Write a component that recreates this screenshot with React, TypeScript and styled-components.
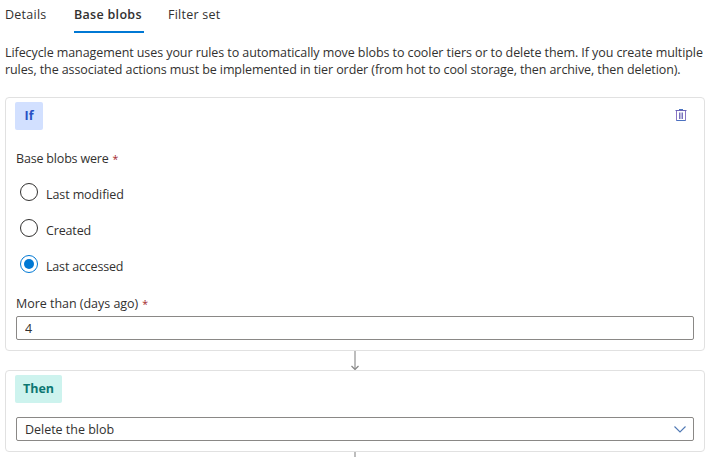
import React, { useState } from "react";
import styled, { createGlobalStyle } from "styled-components";

const GlobalStyle = createGlobalStyle`
  *, *::before, *::after { box-sizing: border-box; }
  body {
    margin: 0;
    background: #fff;
    color: #323130;
    font: 12.5px/17px "Open Sans", "Noto Sans", sans-serif;
    overflow: hidden;
  }
`;

const Page = styled.main`
  width: 712px;
  height: 457px;
  padding: 0 7px 0 5px;
  overflow: hidden;
`;

const TabList = styled.nav`
  display: flex;
  height: 33px;
  gap: 24px;
`;

const Tab = styled.button<{ $active?: boolean; $width: number; $spacing: number }>`
  width: ${(p) => p.$width}px;
  height: 33px;
  padding: 5px 0 8px;
  border: 0;
  border-bottom: 2px solid ${(p) => (p.$active ? "#0078d4" : "transparent")};
  background: none;
  color: inherit;
  font: inherit;
  font-weight: ${(p) => (p.$active ? 600 : 400)};
  letter-spacing: ${(p) => p.$spacing}px;
  text-align: left;
  white-space: nowrap;
`;

const Description = styled.p`
  margin: 11px 0 19px;
  line-height: 17px;
`;

const Line = styled.span<{ $spacing: number }>`
  display: block;
  white-space: nowrap;
  letter-spacing: ${(p) => p.$spacing}px;
`;

const Card = styled.section<{ $height: number }>`
  width: 700px;
  height: ${(p) => p.$height}px;
  padding: 4px 10px 0 9px;
  border: 1px solid #e1e1e1;
  border-radius: 4px;
`;

const CardHeader = styled.header`
  display: flex;
  justify-content: space-between;
  height: 28px;
`;

const Badge = styled.span<{ $tone: "if" | "then"; $width: number }>`
  width: ${(p) => p.$width}px;
  height: 28px;
  border-radius: 2px;
  background: ${(p) => (p.$tone === "if" ? "#d2e0ff" : "#cdf3ee")};
  color: ${(p) => (p.$tone === "if" ? "#2750c4" : "#0d7772")};
  font-weight: 700;
  line-height: 27px;
  text-align: center;
`;

const IconButton = styled.button`
  width: 12px;
  height: 14px;
  margin: 6px 7px 0 0;
  padding: 0;
  border: 0;
  background: none;
  svg { display: block; }
`;

const FieldLabel = styled.div<{ $top: number; $spacing: number }>`
  margin: ${(p) => p.$top}px 0 0 1px;
  letter-spacing: ${(p) => p.$spacing}px;
`;

const Required = styled.span`
  margin-left: 4px;
  color: #a4262c;
  font-size: 10.5px;
  line-height: 1;
`;

const RadioGroup = styled.div`
  display: grid;
  grid-auto-rows: 36px;
  margin: 15px 0 0 5px;
`;

const RadioRow = styled.label<{ $spacing: number }>`
  display: flex;
  align-items: flex-start;
  gap: 8px;
  letter-spacing: ${(p) => p.$spacing}px;
  span { margin-top: 4px; }
`;

const Radio = styled.input`
  appearance: none;
  display: grid;
  place-items: center;
  flex: none;
  width: 18px;
  height: 18px;
  margin: 1px 0 0;
  border: 1px solid #323130;
  border-radius: 50%;
  &:checked { border-color: #0078d4; }
  &:checked::before {
    content: "";
    width: 10px;
    height: 10px;
    border-radius: 50%;
    background: #0078d4;
  }
`;

const TextInput = styled.input`
  display: block;
  width: 678px;
  height: 24px;
  margin: 4px 0 0 1px;
  padding: 0 8px;
  border: 1px solid #8a8886;
  border-radius: 2px;
  color: inherit;
  font: inherit;
  outline: 0;
`;

const Dropdown = styled.button`
  display: flex;
  align-items: center;
  justify-content: space-between;
  width: 678px;
  height: 24px;
  margin: 14px 0 0 1px;
  padding: 0 7px 0 8px;
  border: 1px solid #8a8886;
  border-radius: 2px;
  background: #fff;
  color: inherit;
  font: inherit;
  letter-spacing: -0.02px;
`;

const Connector = styled.div`
  display: flex;
  justify-content: center;
  height: 19px;
  svg { display: block; }
`;

const TrashIcon = () => (
  <svg width="12" height="14" viewBox="0 0 12 14" fill="none" stroke="#6a62b5">
    <path d="M4 1.5h4" stroke="#4a72c0" />
    <path d="M0.5 2.5h11" />
    <path d="M1.5 3v9.5h9V3" stroke="#8a74c4" />
    <path d="M1.5 12.5h9" stroke="#4a72c0" />
    <path d="M4.5 4.5v6.5M6 4.5v6.5M7.5 4.5v6.5" strokeWidth=".9" />
  </svg>
);

const ArrowDown = () => (
  <svg width="10" height="19" viewBox="0 0 10 19" fill="none">
    <path d="M5 0v18" stroke="#bdbdbd" strokeWidth="2" />
    <path d="M1.5 15 5 18.5 8.5 15" stroke="#858585" strokeWidth="1.2" />
  </svg>
);

const ChevronDown = () => (
  <svg width="12" height="7" viewBox="0 0 12 7" fill="none" stroke="#4f78b4" strokeWidth="1.1">
    <path d="M.5.5 6 6 11.5.5" />
  </svg>
);

const conditions = [
  { label: "Last modified", spacing: -0.1 },
  { label: "Created", spacing: -0.15 },
  { label: "Last accessed", spacing: -0.18 },
];

export default function App() {
  const [condition, setCondition] = useState("Last accessed");
  const [days, setDays] = useState("4");
  return (
    <>
      <GlobalStyle />
      <Page>
        <TabList>
          <Tab $width={45} $spacing={0.25}>Details</Tab>
          <Tab $active $width={70} $spacing={0.3}>Base blobs</Tab>
          <Tab $width={54} $spacing={0.25}>Filter set</Tab>
        </TabList>
        <Description>
          <Line $spacing={-0.08}>
            Lifecycle management uses your rules to automatically move blobs to cooler tiers or to delete them. If you create multiple
          </Line>
          <Line $spacing={-0.093}>
            rules, the associated actions must be implemented in tier order (from hot to cool storage, then archive, then deletion).
          </Line>
        </Description>
        <Card $height={254}>
          <CardHeader>
            <Badge $tone="if" $width={28}>If</Badge>
            <IconButton aria-label="Delete condition"><TrashIcon /></IconButton>
          </CardHeader>
          <FieldLabel $top={20} $spacing={-0.18}>Base blobs were<Required>*</Required></FieldLabel>
          <RadioGroup>
            {conditions.map((c) => (
              <RadioRow key={c.label} $spacing={c.spacing}>
                <Radio
                  type="radio"
                  name="condition"
                  checked={condition === c.label}
                  onChange={() => setCondition(c.label)}
                />
                <span>{c.label}</span>
              </RadioRow>
            ))}
          </RadioGroup>
          <FieldLabel $top={5} $spacing={-0.03}>More than (days ago)<Required>*</Required></FieldLabel>
          <TextInput value={days} onChange={(e) => setDays(e.target.value)} />
        </Card>
        <Connector><ArrowDown /></Connector>
        <Card $height={82}>
          <CardHeader>
            <Badge $tone="then" $width={47}>Then</Badge>
          </CardHeader>
          <Dropdown>Delete the blob<ChevronDown /></Dropdown>
        </Card>
        <Connector><ArrowDown /></Connector>
      </Page>
    </>
  );
}
